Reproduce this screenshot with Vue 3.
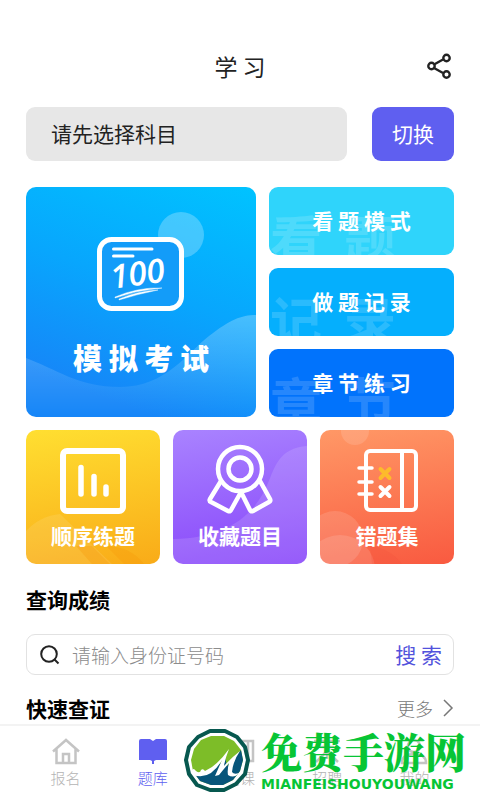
<template>
  <div class="page">
    <header class="header">
      <h1>学 习</h1>
      <button class="share" aria-label="分享">
        <svg viewBox="0 0 26 26" width="26" height="26">
          <path d="M7 11.500L16 6.500M7 15L16 20" />
          <circle cx="4.500" cy="13" r="3.200" />
          <circle cx="19.500" cy="5" r="3.200" />
          <circle cx="19.500" cy="21.500" r="3.200" />
        </svg>
      </button>
    </header>

    <main class="content">
      <div class="subject">
        <button class="subject-name">请先选择科目</button>
        <button class="subject-switch">切换</button>
      </div>

      <div class="modes">
        <button class="card exam">
          <svg class="art" viewBox="0 0 230 230" aria-hidden="true">
            <defs>
              <linearGradient id="wave" x1="0" y1="0" x2="0" y2="1">
                <stop offset="0" stop-color="#fff" stop-opacity=".26" />
                <stop offset="1" stop-color="#fff" stop-opacity="0" />
              </linearGradient>
            </defs>
            <circle cx="155" cy="48" r="23" fill="#fff" fill-opacity=".25" />
            <path d="M0 171C30 182 52 200 94 200C140 200 162 165 183 149S215 128 230 128V230H0Z" fill="url(#wave)" />
            <g class="line">
              <rect x="73.500" y="52.500" width="82" height="69" rx="12" stroke-width="5" fill="#139cf9" />
              <path d="M87.500 62H126M87.500 69H107" stroke-width="3" />
            </g>
            <text x="86" y="102" transform="rotate(-8 86 102)">100</text>
            <path d="M89 110Q112 100 136 101Q112 103 89 111ZM93 112Q112 104 132 103Q112 107 93 113Z" fill="#fff" stroke="#fff" stroke-width=".4" />
          </svg>
          <span class="label">模 拟 考 试</span>
        </button>
        <div class="mode-list">
          <button v-for="m in modes" :key="m.name" class="mode" :class="m.key">
            <span class="ghost" aria-hidden="true"><span v-for="c in m.ghost" :key="c">{{ c }}</span></span>
            <span class="mode-name">{{ m.name }}</span>
          </button>
        </div>
      </div>

      <div class="tools">
        <button class="card order">
          <svg class="art" viewBox="0 0 134 134" aria-hidden="true">
            <path d="M0 101Q14 86 34 84L86 134H0Z" fill="#fff" fill-opacity=".1" />
            <path d="M50 116H66L84 134H66ZM80 116Q104 116 118 134H98Z" fill="#f79a0c" fill-opacity=".35" />
            <g class="line">
              <rect x="37" y="21" width="60" height="60" rx="4" stroke-width="6" />
              <path d="M55 37.500V64M68 46.500V64M80 57V64" stroke-width="5.500" />
            </g>
          </svg>
          <span class="label">顺序练题</span>
        </button>
        <button class="card favorite">
          <svg class="art" viewBox="0 0 134 134" aria-hidden="true">
            <path d="M134 16C106 18 102 37 95 53C83 82 58 108 0 109V134H134Z" fill="#fff" fill-opacity=".13" />
            <g class="line" stroke-width="4.500">
              <circle cx="67" cy="39" r="22" />
              <circle cx="67" cy="39" r="11.500" />
              <path d="M48 51L37 69Q36 71 38 72L55 81Q57 82 58 80L68 62L77 80Q78 82 80 81L96 72Q98 71 97 69L87 51" />
            </g>
          </svg>
          <span class="label">收藏题目</span>
        </button>
        <button class="card wrong">
          <svg class="art" viewBox="0 0 134 134" aria-hidden="true">
            <g fill="#fff" fill-opacity=".13">
              <circle cx="35" cy="1" r="14" />
              <circle cx="15" cy="109" r="28" />
              <circle cx="20" cy="140" r="35" />
            </g>
            <path d="M50 115Q72 120 82 134H52Z" fill="#f4503a" fill-opacity=".25" />
            <g class="line" stroke-width="4">
              <rect x="46" y="21" width="50" height="59" rx="4" />
              <path d="M82 21V80" />
              <path d="M39 38H52M39 52H52M39 64H52" stroke-width="3.500" />
              <path d="M60.500 57L69.500 66M69.500 57L60.500 66" />
              <path class="gold" d="M60.500 39L69.500 48M69.500 39L60.500 48" />
            </g>
          </svg>
          <span class="label">错题集</span>
        </button>
      </div>

      <h2>查询成绩</h2>
      <form class="search" @submit.prevent>
        <svg viewBox="0 0 20 20" width="20" height="20" aria-hidden="true">
          <circle cx="9" cy="9" r="7.800" />
          <path d="M14.500 14.500L18.500 18.500" />
        </svg>
        <input v-model="idNumber" type="text" placeholder="请输入身份证号码" aria-label="请输入身份证号码" />
        <button type="submit">搜 索</button>
      </form>

      <div class="section-head">
        <h2>快速查证</h2>
        <a href="#more">
          更多
          <svg viewBox="0 0 12 18" width="12" height="18" aria-hidden="true"><path d="M2 1L10 9L2 17" /></svg>
        </a>
      </div>
    </main>

    <nav class="tabs">
      <a v-for="t in tabs" :key="t.name" :href="t.href" :class="{ active: t.active }">
        <svg viewBox="0 0 30 28" width="30" height="28" aria-hidden="true"><path :d="t.icon" /></svg>
        <span>{{ t.name }}</span>
      </a>
    </nav>

    <div class="brand">
      <svg viewBox="0 0 68 66" width="68" height="66" aria-hidden="true">
        <path d="M27 3H42L54 9L62 19L65 32L62 46L53 56L41 62H27L14 57L6 46L3 32L6 19L15 9Z" fill="#fff" stroke="#07584f" stroke-width="4" stroke-linejoin="round" />
        <path d="M28 8H41L51 13L58 22L60 32L57 43L50 52L40 57H28L17 53L10 43L8 32L11 21L18 12Z" fill="#7dbd28" />
        <path d="M11 45Q29 49 42 29L44 38L58 22L60 32L57 43L50 52L40 57H28L17 53Z" fill="#07557a" />
        <path d="M9 43Q10 39 13 43Q17 46 18 42Q20 40 22 43Q34 38 46 21Q42 31 41 38Q48 30 57 23Q50 33 49 44Q51 47 56 45Q51 51 45 47Q44 42 46 35Q40 42 36 47L32 48L39 32Q27 53 10 47Z" fill="#fff" />
      </svg>
      <div class="brand-text">
        <strong>免费手游网</strong>
        <span>MIANFEISHOUYOUWANG</span>
      </div>
    </div>
  </div>
</template>

<script setup>
import { ref } from 'vue'

const idNumber = ref('')

const modes = [
  { key: 'view', name: '看 题 模 式', ghost: '看题' },
  { key: 'record', name: '做 题 记 录', ghost: '记录' },
  { key: 'chapter', name: '章 节 练 习', ghost: '章节' }
]

const tabs = [
  { name: '报名', href: '#signup', icon: 'M2 14.500L15 3L28 14.500M5.500 12V26H24.500V12M12 26V17H18V26' },
  { name: '题库', href: '#bank', active: true, icon: 'M3 2H12L15 4L18 2H27Q29 2 29 4V23H18L16 24V27H14V24L12 23H1V4Q1 2 3 2Z' },
  { name: '网课', href: '#course', icon: 'M2 4H28V24H2ZM12 9V19L19 14ZM23 4V24' },
  { name: '招聘', href: '#jobs', icon: 'M2 4H28M8 10H22M15 4V22M4 25L15 14L26 25' },
  { name: '我的', href: '#mine', icon: 'M15 3A6 6 0 1 1 14.900 3M3 26Q3 17 15 17Q27 17 27 26Z' }
]
</script>

<style>
body {
  background: #fff;
}
</style>

<style scoped>
.page {
  position: relative;
  display: flex;
  flex-direction: column;
  height: 100vh;
  font-family: "Noto Sans CJK SC", sans-serif;
  color: #222;
}
button {
  border: 0;
  padding: 0 0 2px;
  background: none;
  font: inherit;
  color: inherit;
  cursor: pointer;
}
a {
  text-decoration: none;
}
h1,
h2 {
  margin: 0;
}
.header {
  display: grid;
  grid-template-columns: 1fr auto 1fr;
  align-items: center;
  padding: 47px 27px 22px;
}
h1 {
  grid-column: 2;
  font-size: 23px;
  font-weight: 400;
  line-height: 38px;
}
.share {
  justify-self: end;
  display: flex;
  padding: 0;
}
.share svg {
  fill: none;
  stroke: #222;
  stroke-width: 2.4;
}
.content {
  flex: 1;
  min-height: 0;
  overflow-y: auto;
  scrollbar-width: none;
  padding: 0 26px;
}
.subject {
  display: flex;
  gap: 25px;
  height: 54px;
  font-size: 21px;
}
.subject-name {
  flex: 1;
  padding-left: 25px;
  border-radius: 9px;
  background: #e7e7e7;
  text-align: left;
}
.subject-switch {
  width: 82px;
  border-radius: 9px;
  background: #5f5ff0;
  color: #fff;
}
.modes {
  display: grid;
  grid-template-columns: 230fr 185fr;
  gap: 13px;
  margin-top: 26px;
}
.card {
  position: relative;
  display: flex;
  align-items: flex-end;
  justify-content: center;
  aspect-ratio: 1;
  border-radius: 10px;
  overflow: hidden;
  color: #fff;
  font-weight: 700;
}
.art {
  position: absolute;
  inset: 0;
  width: 100%;
  height: 100%;
}
.art text {
  fill: #fff;
  font: italic 600 33px "Open Sans", sans-serif;
}
.line {
  fill: none;
  stroke: #fff;
  stroke-linecap: round;
  stroke-linejoin: round;
}
.gold {
  stroke: #fdbb2b;
}
.label {
  position: relative;
}
.exam {
  background: linear-gradient(200deg, #00c3ff 0%, #08a6fd 45%, #1686f8 85%);
}
.exam .label {
  padding-bottom: 38px;
  font-size: 29px;
  font-weight: 900;
  line-height: 40px;
}
.mode-list {
  display: flex;
  flex-direction: column;
  gap: 13px;
}
.mode {
  position: relative;
  flex: 1;
  border-radius: 9px;
  overflow: hidden;
  color: #fff;
  font-size: 21px;
  font-weight: 700;
}
.mode-name {
  position: relative;
}
.ghost {
  position: absolute;
  top: 25px;
  left: 1px;
  display: flex;
  gap: 22px;
  color: rgba(255, 255, 255, 0.15);
  font-size: 52px;
  line-height: 52px;
}
.view {
  background: #2fd4fb;
}
.record {
  background: #05affd;
}
.chapter {
  background: #0173fc;
}
.tools {
  display: grid;
  grid-template-columns: repeat(3, 1fr);
  gap: 13px;
  margin-top: 13px;
}
.tools .label {
  padding-bottom: 13px;
  font-size: 21px;
  line-height: 28px;
}
.order {
  background: linear-gradient(170deg, #ffdf31, #f9ab18);
}
.favorite {
  background: linear-gradient(170deg, #a983ff, #8744fa);
}
.wrong {
  background: linear-gradient(170deg, #ff9866, #f95a40);
}
h2 {
  color: #000;
  font-size: 21px;
  font-weight: 700;
  line-height: 30px;
}
.tools + h2 {
  margin-top: 20px;
}
.search {
  display: flex;
  align-items: center;
  box-sizing: border-box;
  height: 41px;
  margin-top: 20px;
  padding: 0 11px 0 13px;
  border: 1px solid #e2e2e2;
  border-radius: 9px;
}
.search svg {
  fill: none;
  stroke: #222;
  stroke-width: 2;
}
.search input {
  flex: 1;
  min-width: 0;
  padding: 0 0 0 12px;
  border: 0;
  outline: 0;
  background: none;
  font: 300 19px "Noto Sans CJK SC", sans-serif;
}
.search input::placeholder {
  color: #8c8c8c;
}
.search button {
  color: #5252dc;
  font-size: 21px;
}
.section-head {
  display: flex;
  align-items: center;
  justify-content: space-between;
  margin-top: 18px;
}
.section-head a {
  display: flex;
  align-items: center;
  gap: 9px;
  color: #777;
  font-size: 18px;
  font-weight: 300;
  line-height: 26px;
}
.section-head svg {
  fill: none;
  stroke: #777;
  stroke-width: 1.5;
}
.tabs {
  display: flex;
  box-sizing: border-box;
  height: 76px;
  padding: 11px 22px 0;
  border-top: 2px solid #f3f3f3;
  background: #fff;
}
.tabs a {
  flex: 1;
  display: flex;
  flex-direction: column;
  align-items: center;
  gap: 2px;
  color: #b4b4b4;
  font-size: 15px;
  font-weight: 300;
  line-height: 22px;
}
.tabs svg {
  fill: none;
  stroke: #c4c4c4;
  stroke-width: 2.5;
}
.tabs .active {
  color: #5f5ff0;
}
.tabs .active svg {
  fill: #5f5ff0;
  stroke: none;
}
.brand {
  position: absolute;
  right: 14px;
  bottom: 6px;
  display: flex;
  align-items: center;
  gap: 10px;
  color: #07c535;
  pointer-events: none;
}
.brand-text {
  display: flex;
  flex-direction: column;
  gap: 3px;
}
.brand strong {
  font-family: "Noto Serif CJK SC", "Noto Sans CJK SC", serif;
  font-size: 41px;
  font-weight: 900;
  line-height: 42px;
}
.brand span {
  font-family: "DejaVu Sans", sans-serif;
  font-size: 14px;
  font-weight: 700;
  line-height: 18px;
}
</style>
